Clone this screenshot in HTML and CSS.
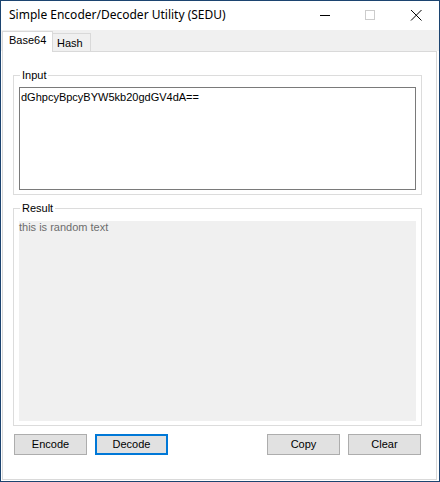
FILE: index.html
```html
<!DOCTYPE html>
<html>
<head>
<meta charset="utf-8">
<title>Simple Encoder/Decoder Utility (SEDU)</title>
<link rel="stylesheet" href="styles.css">
</head>
<body>
<div class="window">
  <div class="titlebar">
    <span class="title">Simple Encoder/Decoder Utility (SEDU)</span>
    <div class="controls">
      <span class="ctl"><svg width="12" height="12" viewBox="0 0 12 12"><line x1="2" y1="5.5" x2="12" y2="5.5" stroke="#000" stroke-width="1"/></svg></span>
      <span class="ctl"><svg width="12" height="12" viewBox="0 0 12 12"><rect x="1.5" y="0.5" width="9" height="9" fill="none" stroke="#cccccc" stroke-width="1"/></svg></span>
      <span class="ctl"><svg width="12" height="12" viewBox="0 0 12 12"><path d="M1 0 L11.5 10.5 M11.5 0 L1 10.5" stroke="#000" stroke-width="1" fill="none"/></svg></span>
    </div>
  </div>
  <div class="tabstrip">
    <div class="tab tab-active">Base64</div>
    <div class="tab tab-inactive">Hash</div>
  </div>
  <div class="panel">
    <div class="group group-input">
      <span class="group-label">Input</span>
      <div class="textbox">dGhpcyBpcyBYW5kb20gdGV4dA==</div>
    </div>
    <div class="group group-result">
      <span class="group-label">Result</span>
      <div class="result">this is random text</div>
    </div>
    <div class="buttons">
      <div class="btn-pair">
        <button class="btn">Encode</button>
        <button class="btn btn-focused">Decode</button>
      </div>
      <div class="btn-pair">
        <button class="btn">Copy</button>
        <button class="btn">Clear</button>
      </div>
    </div>
  </div>
</div>
</body>
</html>
```

FILE: styles.css
```css
* {
  box-sizing: border-box;
}

html, body {
  margin: 0;
  padding: 0;
  background: #ffffff;
}

.window {
  width: 440px;
  height: 482px;
  border: 1px solid #1c4470;
  display: flex;
  flex-direction: column;
  font-family: "Liberation Sans", Arial, sans-serif;
  font-size: 11px;
  line-height: 13px;
  color: #000000;
}

.titlebar {
  height: 29px;
  flex: none;
  display: flex;
  align-items: flex-start;
  background: #ffffff;
}

.title {
  padding-left: 8px;
  padding-top: 6px;
  font-family: "Noto Sans", "Segoe UI", sans-serif;
  font-size: 12px;
  line-height: 16px;
  color: #000000;
}

.controls {
  margin-left: auto;
  display: flex;
}

.ctl {
  width: 46px;
  height: 29px;
  padding-top: 9px;
  padding-left: 17px;
  display: block;
}

.ctl svg {
  display: block;
}

.tabstrip {
  height: 21px;
  flex: none;
  background: #f0f0f0;
  display: flex;
  align-items: flex-end;
  padding-left: 1px;
}

.tab {
  border: 1px solid #d9d9d9;
  border-bottom: none;
}

.tab-active {
  position: relative;
  z-index: 1;
  width: 51px;
  height: 21px;
  margin-bottom: -1px;
  padding: 2px 0 0 6px;
  background: #ffffff;
}

.tab-inactive {
  width: 38px;
  height: 18px;
  border-left: none;
  padding: 3px 0 0 4px;
  background: #f0f0f0;
}

.panel {
  width: 435px;
  height: 429px;
  margin-left: 1px;
  border: 1px solid #d9d9d9;
  padding: 23px 14px 0 10px;
  background: #ffffff;
}

.group {
  position: relative;
  border: 1px solid #dcdcdc;
}

.group-input {
  padding: 11px 5px 4px 5px;
}

.group-result {
  margin-top: 13px;
  padding: 12px 5px 4px 5px;
}

.group-label {
  position: absolute;
  top: -7px;
  left: 6px;
  padding: 0 2px;
  background: #ffffff;
  line-height: 13px;
}

.textbox {
  height: 103px;
  border: 1px solid #7a7a7a;
  padding: 3px 2px 0 1px;
  background: #ffffff;
  white-space: nowrap;
}

.result {
  height: 200px;
  background: #f0f0f0;
  color: #6d6d6d;
  padding: 0;
  white-space: nowrap;
}

.buttons {
  display: flex;
  justify-content: space-between;
  margin: 8px 1px 0 1px;
}

.btn-pair {
  display: flex;
  gap: 8px;
}

.btn {
  width: 73px;
  height: 21px;
  margin: 0;
  padding: 0;
  border: 1px solid #adadad;
  background: #e1e1e1;
  font-family: "Liberation Sans", Arial, sans-serif;
  font-size: 11px;
  line-height: 13px;
  color: #000000;
  text-align: center;
}

.btn-focused {
  border: 2px solid #0078d7;
}
```
